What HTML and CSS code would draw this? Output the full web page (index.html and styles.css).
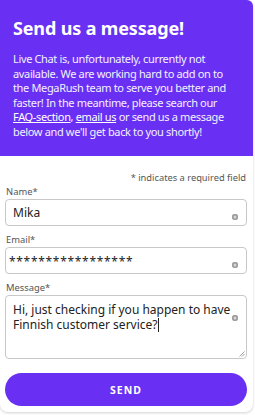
FILE: index.html
```html
<!DOCTYPE html>
<html>
<head>
<meta charset="utf-8">
<link rel="stylesheet" href="styles.css">
</head>
<body>
<div class="card">
  <div class="header">
    <h1 class="title">Send us a message!</h1>
    <p class="intro">Live Chat is, unfortunately, currently not available. We are working hard to add on to the MegaRush team to serve you better and faster! In the meantime, please search our <a class="link">FAQ-section</a>, <a class="link">email us</a> or send us a message below and we'll get back to you shortly!</p>
  </div>
  <div class="form">
    <div class="note">* indicates a required field</div>
    <label class="label">Name*</label>
    <div class="field">
      <span class="value">Mika</span>
      <span class="icon"></span>
    </div>
    <label class="label">Email*</label>
    <div class="field">
      <span class="value stars">*****************</span>
      <span class="icon"></span>
    </div>
    <label class="label">Message*</label>
    <div class="field area">
      <span class="value">Hi, just checking if you happen to have Finnish customer service?<span class="caret"></span></span>
      <span class="icon icon-top"></span>
      <svg class="grip" width="6" height="6" viewBox="0 0 6 6"><path d="M5.5 0.5 L0.5 5.5 M5.5 3 L3 5.5" stroke="#888" stroke-width="0.8" fill="none"/></svg>
    </div>
    <button class="send">SEND</button>
  </div>
</div>
</body>
</html>
```
FILE: styles.css
```css
html, body {
  margin: 0;
  padding: 0;
  background: #ffffff;
}
body {
  font-family: "Noto Sans", "Open Sans", sans-serif;
  width: 255px;
  height: 415px;
  overflow: hidden;
}
.card {
  width: 253px;
  height: 412px;
  background: #ffffff;
  border-radius: 0 6px 8px 8px;
  box-shadow: 0 1px 3px rgba(0, 0, 0, 0.18);
  overflow: hidden;
}
.header {
  background: #6930f3;
  color: #ffffff;
  padding: 15px 20px 12px 13px;
  height: 129px;
}
.title {
  margin: 0;
  font-size: 18px;
  line-height: 26px;
  font-weight: 700;
  letter-spacing: -0.15px;
}
.intro {
  margin: 11px 0 0;
  font-size: 11px;
  line-height: 14.6px;
  letter-spacing: -0.35px;
  color: #f4f0ff;
}
.link {
  color: #ffffff;
  text-decoration: underline;
}
.form {
  padding: 15px 6px 0 5px;
  display: flex;
  flex-direction: column;
}
.note {
  text-align: right;
  font-size: 9.3px;
  line-height: 14px;
  color: #555555;
  padding-right: 1px;
}
.label {
  font-size: 9.4px;
  line-height: 14px;
  color: #555555;
  padding-left: 1px;
}
.field {
  position: relative;
  height: 27px;
  border: 1px solid #c8c8c8;
  border-radius: 4px;
  box-sizing: border-box;
  padding: 0 20px 0 7px;
  display: flex;
  align-items: center;
  margin-bottom: 7px;
}
.value {
  font-size: 12px;
  color: #222222;
  line-height: 14px;
}
.stars {
  font-size: 12px;
  letter-spacing: 0.7px;
  margin-left: -4px;
  padding-top: 2px;
}
.area {
  height: 64px;
  align-items: flex-start;
  padding-top: 7px;
  padding-right: 10px;
  margin-bottom: 14px;
}
.area .value {
  line-height: 14.5px;
}
.caret {
  display: inline-block;
  width: 1px;
  height: 14px;
  background: #222;
  vertical-align: -3px;
}
.icon {
  position: absolute;
  right: 8px;
  top: 14px;
  width: 6px;
  height: 6px;
  border-radius: 50%;
  background: #9a9a9a;
  box-shadow: inset 0 0 0 1.5px #9a9a9a, inset 0 0 0 3px #d6d6d6;
}
.icon-top {
  top: 19px;
}
.grip {
  position: absolute;
  right: 1px;
  bottom: 1px;
}
.send {
  height: 33px;
  border: none;
  border-radius: 17px;
  background: #6930f3;
  color: #ffffff;
  font-family: "Noto Sans", "Open Sans", sans-serif;
  font-weight: 700;
  font-size: 10.5px;
  letter-spacing: 1px;
  padding: 0;
}
```
